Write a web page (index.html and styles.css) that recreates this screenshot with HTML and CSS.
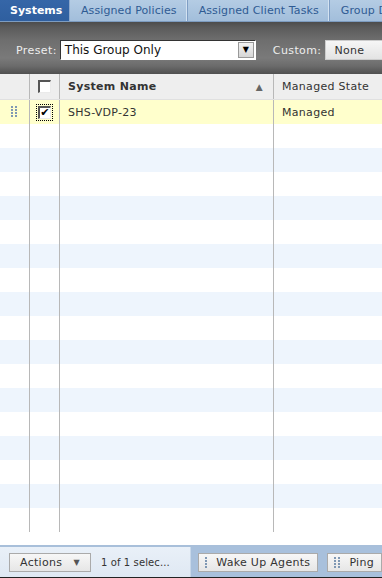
FILE: index.html
```html
<!DOCTYPE html>
<html lang="en">
<head>
  <meta charset="UTF-8">
  <title>Systems</title>
  <meta name="viewport" content="width=device-width, initial-scale=1.0">
  <link rel="stylesheet" href="styles.css">
</head>
<body>
  <div class="page">
    <div class="tabs">
      <div class="tab active">Systems</div>
      <div class="tab">Assigned Policies</div>
      <div class="tab">Assigned Client Tasks</div>
      <div class="tab">Group Details</div>
    </div>

    <div class="toolbar">
      <span class="label">Preset:</span>
      <div class="select">
        <span class="select-text">This Group Only</span>
        <span class="select-btn">&#9660;</span>
      </div>
      <span class="label custom">Custom:</span>
      <div class="select light">
        <span class="select-text">None</span>
      </div>
    </div>

    <div class="grid">
      <div class="row head">
        <div class="cell c-grip"></div>
        <div class="cell c-check"><span class="box"></span></div>
        <div class="cell c-name">System Name <span class="sort">&#9650;</span></div>
        <div class="cell c-state">Managed State</div>
      </div>
      <div class="row selected">
        <div class="cell c-grip"><span class="grip"></span></div>
        <div class="cell c-check"><span class="focus"><span class="box checked">&#10004;</span></span></div>
        <div class="cell c-name">SHS-VDP-23</div>
        <div class="cell c-state">Managed</div>
      </div>
      <div class="row"><div class="cell c-grip"></div><div class="cell c-check"></div><div class="cell c-name"></div><div class="cell c-state"></div></div>
      <div class="row alt"><div class="cell c-grip"></div><div class="cell c-check"></div><div class="cell c-name"></div><div class="cell c-state"></div></div>
      <div class="row"><div class="cell c-grip"></div><div class="cell c-check"></div><div class="cell c-name"></div><div class="cell c-state"></div></div>
      <div class="row alt"><div class="cell c-grip"></div><div class="cell c-check"></div><div class="cell c-name"></div><div class="cell c-state"></div></div>
      <div class="row"><div class="cell c-grip"></div><div class="cell c-check"></div><div class="cell c-name"></div><div class="cell c-state"></div></div>
      <div class="row alt"><div class="cell c-grip"></div><div class="cell c-check"></div><div class="cell c-name"></div><div class="cell c-state"></div></div>
      <div class="row"><div class="cell c-grip"></div><div class="cell c-check"></div><div class="cell c-name"></div><div class="cell c-state"></div></div>
      <div class="row alt"><div class="cell c-grip"></div><div class="cell c-check"></div><div class="cell c-name"></div><div class="cell c-state"></div></div>
      <div class="row"><div class="cell c-grip"></div><div class="cell c-check"></div><div class="cell c-name"></div><div class="cell c-state"></div></div>
      <div class="row alt"><div class="cell c-grip"></div><div class="cell c-check"></div><div class="cell c-name"></div><div class="cell c-state"></div></div>
      <div class="row"><div class="cell c-grip"></div><div class="cell c-check"></div><div class="cell c-name"></div><div class="cell c-state"></div></div>
      <div class="row alt"><div class="cell c-grip"></div><div class="cell c-check"></div><div class="cell c-name"></div><div class="cell c-state"></div></div>
      <div class="row"><div class="cell c-grip"></div><div class="cell c-check"></div><div class="cell c-name"></div><div class="cell c-state"></div></div>
      <div class="row alt"><div class="cell c-grip"></div><div class="cell c-check"></div><div class="cell c-name"></div><div class="cell c-state"></div></div>
      <div class="row"><div class="cell c-grip"></div><div class="cell c-check"></div><div class="cell c-name"></div><div class="cell c-state"></div></div>
      <div class="row alt"><div class="cell c-grip"></div><div class="cell c-check"></div><div class="cell c-name"></div><div class="cell c-state"></div></div>
      <div class="row"><div class="cell c-grip"></div><div class="cell c-check"></div><div class="cell c-name"></div><div class="cell c-state"></div></div>
    </div>

    <div class="spacer"></div>

    <div class="footer">
      <div class="footer-left">
        <button class="btn actions">Actions <span class="arrow">&#9660;</span></button>
        <span class="count">1 of 1 selec...</span>
      </div>
      <div class="footer-right">
        <button class="btn wake"><span class="grip small"></span>Wake Up Agents</button>
        <button class="btn"><span class="grip small"></span>Ping</button>
      </div>
    </div>
  </div>
</body>
</html>
```

FILE: styles.css
```css
* {
  box-sizing: border-box;
}

body {
  margin: 0;
  font-family: 'DejaVu Sans', Verdana, sans-serif;
  font-size: 11px;
  background: #fff;
  color: #333;
  overflow: hidden;
}

.page {
  width: 382px;
  height: 578px;
  display: flex;
  flex-direction: column;
  overflow: hidden;
}

/* tabs */
.tabs {
  display: flex;
  height: 22px;
  background: linear-gradient(#b4cce4, #a2bedb);
  border-bottom: 1px solid #7d9cc0;
  white-space: nowrap;
  overflow: hidden;
}

.tab {
  flex: none;
  padding: 0 10px 0 11px;
  line-height: 21px;
  color: #2f5b93;
  letter-spacing: 0.1px;
  border-right: 1px solid #7f9ec4;
  box-shadow: inset -1px 0 0 #d3e2f1;
}

.tab.active {
  width: 70px;
  padding: 0 10px;
  color: #fff;
  font-weight: bold;
  letter-spacing: 0;
  background: linear-gradient(#3566a8, #2f5f9f);
  border-right: 1px solid #8ea9cc;
  box-shadow: none;
}

/* toolbar */
.toolbar {
  height: 52px;
  display: flex;
  align-items: center;
  padding: 4px 0 0 16px;
  background: linear-gradient(#4c4c4c 0, #5a5a5a 5px, #6e6e6e 18px, #7a7a7a 36px, #6b6b6b 44px, #505050 52px);
  white-space: nowrap;
}

.label {
  color: #eee;
  margin-right: 3px;
  letter-spacing: 0.4px;
}

.label.custom {
  margin-left: 17px;
}

.select {
  flex: none;
  width: 196px;
  height: 20px;
  display: flex;
  align-items: center;
  justify-content: space-between;
  background: #fff;
  border: 1px solid #fff;
  border-top-color: #333;
  border-left-color: #333;
  padding: 0 1px 0 4px;
}

.select-text {
  font-size: 12px;
  color: #111;
}

.select-btn {
  width: 16px;
  height: 16px;
  background: linear-gradient(#f3f3f3, #d6d6d6);
  border: 1px solid #999;
  font-size: 8px;
  color: #000;
  text-align: center;
  line-height: 14px;
}

.select.light {
  width: 80px;
  margin-left: 1px;
  background: linear-gradient(#f6f6f6, #e3e3e3);
  border: 1px solid #ccc;
  padding-left: 8px;
}

.select.light .select-text {
  font-size: 11px;
  color: #333;
  letter-spacing: 0.3px;
}

/* grid */
.grid {
  flex: none;
}

.row {
  display: flex;
  height: 24px;
  background: #fff;
}

.row.alt {
  background: #eef5fd;
}

.row.selected {
  background: #ffffcc;
}

.row.head {
  height: 26px;
  background: #eeeeee;
  border-bottom: 1px solid #e0e0e0;
}

.cell {
  flex: none;
  height: 100%;
  display: flex;
  align-items: center;
  border-right: 1px solid #b8b8b8;
  padding-left: 8px;
  white-space: nowrap;
  overflow: hidden;
  letter-spacing: 0.3px;
}

.c-grip {
  width: 30px;
  padding-left: 11px;
}

.c-check {
  width: 30px;
  padding-left: 8px;
}

.c-name {
  width: 214px;
  justify-content: space-between;
  padding-right: 10px;
}

.c-state {
  flex: 1;
  border-right: none;
}

.head .cell {
  font-weight: bold;
  color: #333;
}

.head .c-state {
  font-weight: normal;
}

.sort {
  color: #666;
  font-size: 9px;
}

.box {
  width: 13px;
  height: 13px;
  background: #fff;
  border: 1px solid #eaeaea;
  border-top: 2px solid #555;
  border-left: 2px solid #555;
  display: inline-block;
}

.focus {
  display: inline-block;
  padding: 1px;
  border: 1px dotted #000;
  margin-left: -2px;
}

.box.checked {
  font-size: 11px;
  line-height: 10px;
  color: #000;
  text-align: center;
  font-weight: bold;
}

.grip {
  width: 7px;
  height: 12px;
  background-image: radial-gradient(circle at 1px 1px, #7f98b4 1px, transparent 1.1px);
  background-size: 4px 3px;
  display: inline-block;
}

.grip.small {
  margin-right: 8px;
  height: 11px;
}

.spacer {
  flex: 1;
  background: #fff;
}

/* footer */
.footer {
  height: 33px;
  display: flex;
  border-top: 2px solid #a8bfda;
  border-bottom: 1px solid #222;
  white-space: nowrap;
}

.footer-left {
  width: 193px;
  display: flex;
  align-items: center;
  padding-left: 9px;
  background: linear-gradient(#e9f0f8, #dfe8f3);
}

.footer-right {
  flex: 1;
  display: flex;
  align-items: center;
  padding-left: 7px;
  background: #a8c0dc;
  border-left: 1px solid #c8d8ea;
  gap: 9px;
}

.btn {
  height: 19px;
  font-family: 'DejaVu Sans', Verdana, sans-serif;
  font-size: 11px;
  color: #333;
  background: linear-gradient(#f7f7f7, #e6e6e6);
  border: 1px solid #aaa;
  padding: 0 7px 0 6px;
  display: flex;
  align-items: center;
  letter-spacing: 0.3px;
}

.btn.wake {
  width: 120px;
}

.btn.actions {
  width: 82px;
  padding-left: 10px;
  justify-content: space-between;
  padding-right: 10px;
}

.arrow {
  font-size: 8px;
  color: #555;
}

.count {
  margin-left: 10px;
  font-size: 10px;
  color: #333;
  letter-spacing: 0.1px;
}
```
